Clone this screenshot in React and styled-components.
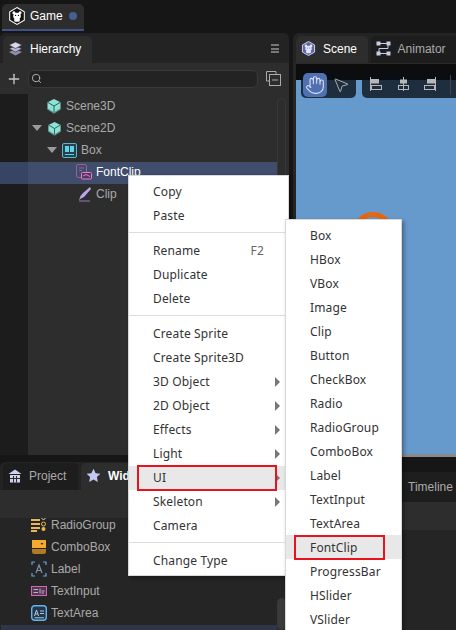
import React from 'react';
import styled, {createGlobalStyle} from 'styled-components';
import {Hand, MousePointer2, Plus, Search} from 'lucide-react';

const GlobalStyle = createGlobalStyle`
    html, body {
        margin: 0;
        padding: 0;
        background: #161616;
    }
    * {
        box-sizing: border-box;
    }
`;

const Page = styled.div`
    position: relative;
    width: 456px;
    height: 630px;
    overflow: hidden;
    display: flex;
    flex-direction: column;
    background: #161616;
    font-family: "Liberation Sans", Arial, sans-serif;
    font-size: 12px;
    color: #aaa;
`;

const TopBar = styled.div`
    height: 33px;
    flex: none;
    padding: 4px 0 0 2px;
    display: flex;
    align-items: flex-start;
`;

const GameTab = styled.div`
    width: 82px;
    height: 27px;
    padding: 0 0 2px 6px;
    display: flex;
    align-items: center;
    gap: 4px;
    background: #2d2d2d;
    border-bottom: 2px solid #3f5486;
    border-radius: 5px 5px 0 0;
    color: #fff;
`;

const Dot = styled.span`
    width: 8px;
    height: 8px;
    margin-left: 2px;
    border-radius: 50%;
    background: #46608f;
`;

const Workspace = styled.div`
    flex: 1;
    min-height: 0;
    display: grid;
    grid-template-columns: 289px 167px;
    column-gap: 4px;
    width: 460px;
`;

const Column = styled.div`
    display: flex;
    flex-direction: column;
    min-height: 0;
`;

const Panel = styled.div`
    display: flex;
    flex-direction: column;
    height: ${p => p.$height}px;
    margin-top: ${p => p.$top || 0}px;
    flex: ${p => (p.$grow ? 1 : 'none')};
    overflow: hidden;
    position: relative;
    border-radius: ${p => (p.$square ? '0' : '6px 6px 0 0')};
    background: #252525;
`;

const TabRow = styled.div`
    height: ${p => p.$height || 30}px;
    flex: none;
    padding: ${p => p.$top || 3}px 0 0 3px;
    display: flex;
    gap: 3px;
    background: #232323;
    position: relative;
`;

const Tab = styled.div`
    width: ${p => p.$width}px;
    height: 27px;
    padding: 0 0 2px 5px;
    display: flex;
    align-items: center;
    gap: 7px;
    border-radius: 5px 5px 0 0;
    background: ${p => (p.$active ? '#2d2d2d' : '#1d1d1d')};
    color: ${p => (p.$active ? '#fff' : '#aaa')};
    font-weight: ${p => (p.$bold ? 700 : 400)};
`;

const MenuIconButton = styled.div`
    position: absolute;
    right: 10px;
    top: 11px;
    width: 8px;
    height: 9px;
    border-top: 2px solid #777;
    border-bottom: 2px solid #777;

    &::after {
        content: '';
        display: block;
        margin-top: 1.5px;
        height: 2px;
        background: #777;
    }
`;

const TreeTools = styled.div`
    height: 31px;
    flex: none;
    padding: 0 0 0 6px;
    display: flex;
    align-items: center;
    background: #2d2d2d;
    color: #c8c8c8;
`;

const SearchBox = styled.div`
    width: 230px;
    height: 18px;
    margin-left: 6px;
    padding-left: 2px;
    display: flex;
    align-items: center;
    background: #232323;
    border: 1px solid #3a3a3a;
    border-radius: 6px;
    color: #bbb;
`;

const Collapse = styled.svg`
    margin-left: 8px;
`;

const TreeBody = styled.div`
    flex: 1;
    position: relative;
    padding-top: 2px;
    background: linear-gradient(90deg, #1c1c1c 28px, #2d2d2d 28px);
`;

const TreeRow = styled.div`
    height: 22px;
    width: 277px;
    padding: 0 0 2px ${p => p.$indent}px;
    display: flex;
    align-items: center;
    background: ${p => (p.$selected ? 'rgba(86, 112, 178, 0.48)' : 'transparent')};
    color: ${p => (p.$selected ? '#fff' : '#aaa')};
`;

const Arrow = styled.span`
    width: 0;
    height: 0;
    margin-right: 5px;
    border-left: 5px solid transparent;
    border-right: 5px solid transparent;
    border-top: 6px solid #9a9a9a;
`;

const RowIcon = styled.svg`
    flex: none;
    margin-right: 4px;
`;

const ScrollTrack = styled.div`
    position: absolute;
    left: 277px;
    top: ${p => p.$top}px;
    bottom: 0;
    width: 9px;
    border: 1px solid #383838;
    border-radius: 5px;
    background: ${p => p.$fill || 'transparent'};
`;

const WidgetTools = styled.div`
    height: 28px;
    flex: none;
    background: #2d2d2d;
`;

const WidgetList = styled.div`
    flex: 1;
    position: relative;
    padding-left: 31px;
    background: #252525;
`;

const WidgetRow = styled.div`
    height: 22px;
    display: flex;
    align-items: center;
    gap: 4px;

    &:first-child {
        margin-top: -4px;
    }
`;

const WidgetActive = styled.div`
    position: absolute;
    left: 1px;
    right: 12px;
    top: 107px;
    height: 6px;
    background: #2e3648;
`;

const Viewport = styled.div`
    flex: 1;
    position: relative;
    margin-left: 3px;
    display: flex;
    flex-direction: column;
    background: #0d0d0d;
    border-top: 1px solid #2a2a2a;
`;

const SceneBlue = styled.div`
    flex: 1;
    margin-top: 16px;
    background: #6699cc;
    position: relative;
    border-bottom: 3px solid #8a8a8a;

    &::after {
        content: '';
        position: absolute;
        right: -4px;
        bottom: -6px;
        width: 8px;
        height: 8px;
        border-radius: 50%;
        background: #555;
    }
`;

const OrangeRing = styled.div`
    position: absolute;
    left: 56px;
    top: 132px;
    width: 42px;
    height: 42px;
    border: 5px solid #e8650f;
    border-radius: 50%;
`;

const ToolGroup = styled.div`
    position: absolute;
    left: ${p => p.$left}px;
    top: 7px;
    width: ${p => p.$width}px;
    height: 27px;
    padding-left: ${p => p.$pad}px;
    display: flex;
    align-items: center;
    gap: ${p => p.$gap}px;
    border-radius: 5px;
    background: rgba(10, 15, 22, 0.78);
    color: #b8b8b8;
`;

const ToolButton = styled.div`
    width: 24px;
    height: 24px;
    display: flex;
    align-items: center;
    justify-content: center;
    border-radius: 5px;
    background: ${p => (p.$on ? '#5070b2' : 'transparent')};
    color: ${p => (p.$on ? '#d8e0f0' : '#b0b0b0')};
`;

const PointerButton = styled(ToolButton)`
    padding-left: 4px;
`;

const ToolSep = styled.span`
    width: 1px;
    height: 20px;
    background: #444;
`;

const TimelineBar = styled.div`
    height: 30px;
    flex: none;
    padding: 0 0 0 115px;
    display: flex;
    align-items: center;
    background: #1e1e1e;
    color: #aaa;
`;

const TimelineTools = styled.div`
    height: 28px;
    flex: none;
    background: #2d2d2d;
`;

const Menu = styled.div`
    position: absolute;
    left: ${p => p.$left}px;
    top: ${p => p.$top}px;
    width: ${p => p.$width}px;
    padding: ${p => p.$pad}px 0 2px;
    background: #fff;
    border: 1px solid #d8d8d8;
    box-shadow: 2px 2px 4px rgba(0, 0, 0, 0.35);
    font-family: "Noto Sans", "Open Sans", sans-serif;
    font-size: 12px;
    color: #333;
`;

const Item = styled.div`
    position: relative;
    height: 24px;
    padding: 0 24px ${p => p.$bottom}px;
    display: flex;
    align-items: center;
    justify-content: space-between;
    background: ${p => (p.$hot ? '#e8e8e8' : 'transparent')};
    letter-spacing: 0.15px;

    &::after {
        content: '';
        display: ${p => (p.$mark ? 'block' : 'none')};
        box-sizing: border-box;
        position: absolute;
        left: ${p => p.$markLeft}px;
        width: ${p => p.$markWidth}px;
        top: ${p => p.$markTop}px;
        height: ${p => p.$markHeight}px;
        border: 2px solid #e8131f;
    }
`;

const Shortcut = styled.span`
    color: #666;
`;

const SubArrow = styled.span`
    position: absolute;
    right: 8px;
    top: 7px;
    width: 0;
    height: 0;
    border-top: 5px solid transparent;
    border-bottom: 5px solid transparent;
    border-left: 5px solid #777;
`;

const Separator = styled.div`
    height: 1px;
    margin: 4px 0 6px;
    background: #ddd;
`;

const Cube = ({size = 16}) => (
    <RowIcon width={size} height={size} viewBox='0 0 16 16'>
        <path d='M8 1 14.5 4.2V11L8 15 1.500 11V4.200Z' fill='#8fe3d6' />
        <path d='M8 8V15M1.500 4.200 8 8 14.500 4.200' stroke='#2d5f5a' strokeWidth='1' fill='none' />
        <path d='M1.500 11 8 15 14.500 11' stroke='#5a8f88' strokeWidth='1.200' fill='none' />
    </RowIcon>
);

const BoxIcon = () => (
    <RowIcon width={15} height={15} viewBox='0 0 15 15'>
        <rect x='.5' y='.5' width='14' height='14' rx='1.500' fill='#24414c' stroke='#5cb5cc' />
        <rect x='3' y='3' width='9' height='6' fill='#63d0ea' />
        <path d='M3 11H12M7.500 3V9' stroke='#24414c' />
        <path d='M3 11.500H12' stroke='#63d0ea' />
    </RowIcon>
);

const FontClipIcon = () => (
    <RowIcon width={16} height={16} viewBox='0 0 16 16'>
        <rect x='.5' y='.5' width='10' height='13' rx='1.500' fill='none' stroke='#9a5f9a' />
        <path d='M3 4H8M3 6.500H6' stroke='#9a5f9a' />
        <rect x='5.500' y='8.500' width='10' height='6.500' rx='1' fill='#4a3a5e' stroke='#f07ccf' />
        <path d='M7 12 10 10.500 14 12.500' stroke='#f07ccf' fill='none' />
    </RowIcon>
);

const ClipIcon = () => (
    <RowIcon width={14} height={16} viewBox='0 0 14 16' style={{marginLeft: 1}}>
        <path d='M12 1 13 3 6 11 3 12.500 1 14 2.500 10 5 7Z' fill='#b9a6ec' />
        <path d='M1 15H12' stroke='#8f7fc4' />
    </RowIcon>
);

const RadioGroupIcon = () => (
    <RowIcon width={16} height={16} viewBox='0 0 16 16' style={{marginRight: 0}}>
        <path d='M0 3H9M0 7H9M0 11H9M0 14H6' stroke='#eab755' strokeWidth='2' />
        <circle cx='12.500' cy='7' r='2' fill='none' stroke='#eab755' />
        <circle cx='12.500' cy='12' r='2' fill='#eab755' />
        <path d='M10.500 1 12.500 3 14.500 1' stroke='#ddd' fill='none' />
    </RowIcon>
);

const ComboIcon = () => (
    <RowIcon width={16} height={16} viewBox='0 0 16 16' style={{marginRight: 0}}>
        <path d='M1 1H15V9H1Z' fill='#f4a92f' />
        <path d='M1 10H15V12.500Q15 15 12.500 15H3.500Q1 15 1 12.500Z' fill='#b47a22' />
        <path d='M9.500 4H12.500L11 6Z' fill='#333' />
    </RowIcon>
);

const LabelIcon = () => (
    <RowIcon width={16} height={16} viewBox='0 0 16 16' style={{marginRight: 0}}>
        <path d='M4 1H1V4M12 1H15V4M1 12V15H4M15 12V15H12' stroke='#5ea8e6' strokeWidth='1.200' fill='none' />
        <path d='M5 12 8 4 11 12M6 9.500H10' stroke='#7d93ae' strokeWidth='1.200' fill='none' />
    </RowIcon>
);

const TextInputIcon = () => (
    <RowIcon width={16} height={16} viewBox='0 0 16 16' style={{marginRight: 0}}>
        <rect x='.5' y='3.500' width='15' height='9' fill='#4d3a50' stroke='#d466b6' />
        <path d='M2.500 6.500H7M2.500 9.500H7M9 5.500V10.500M10.500 8H13.500M10.500 10H13' stroke='#d9a3cc' />
    </RowIcon>
);

const TextAreaIcon = () => (
    <RowIcon width={16} height={16} viewBox='0 0 16 16' style={{marginRight: 0}}>
        <rect x='.7' y='.7' width='14.600' height='14.600' rx='3' fill='#23374c' stroke='#66b4ee' strokeWidth='1.400' />
        <path d='M3.500 11 5.500 5 7.500 11M4.300 9H6.700M9 6H13M9 8.500H13M3.500 12.800H13' stroke='#bcd8ee' fill='none' strokeWidth='.9' />
    </RowIcon>
);

const BearHex = ({size, fill, face}) => (
    <svg width={size} height={size} viewBox='0 0 16 16' style={{flex: 'none'}}>
        <path d='M8 .5 14.500 4.200V11.800L8 15.500 1.500 11.800V4.200Z' fill={fill} stroke={face} strokeWidth='.9' />
        <circle cx='5.300' cy='5.200' r='1.400' fill={face} />
        <circle cx='10.700' cy='5.200' r='1.400' fill={face} />
        <ellipse cx='8' cy='8' rx='3.400' ry='3' fill={face} />
        <rect x='5.500' y='10' width='5' height='3' rx='1' fill={face} />
        <circle cx='6.700' cy='7.500' r='.6' fill={fill} />
        <circle cx='9.300' cy='7.500' r='.6' fill={fill} />
    </svg>
);

const LayersIcon = () => (
    <svg width={15} height={15} viewBox='0 0 15 15' style={{flex: 'none'}}>
        <path d='M7.500 8.500 1 11 7.500 14.500 14 11Z' fill='#8d8fae' />
        <path d='M7.500 5 1 7.700 7.500 11 14 7.700Z' fill='#b4b6d2' stroke='#2d2d2d' strokeWidth='.6' />
        <path d='M7.500 1 1 4 7.500 7.500 14 4Z' fill='#d5d7ee' stroke='#2d2d2d' strokeWidth='.6' />
    </svg>
);

const AnimatorIcon = () => (
    <svg width={15} height={15} viewBox='0 0 15 15' style={{flex: 'none'}}>
        <path d='M3 2.500H12M12 2.500V7.500H3V12.500H12' stroke='#c8cdea' fill='none' />
        <rect x='0.500' y='0.500' width='4' height='4' fill='#c8cdea' />
        <rect x='10.500' y='0.500' width='4' height='4' fill='#c8cdea' />
        <rect x='0.500' y='10.500' width='4' height='4' fill='#c8cdea' />
        <rect x='10.500' y='10.500' width='4' height='4' fill='#c8cdea' />
    </svg>
);

const HouseIcon = () => (
    <svg width={14} height={14} viewBox='0 0 14 14' style={{flex: 'none'}}>
        <path d='M7 .5 13.500 5H.5Z' fill='#cfd2ea' />
        <path d='M2 6H12V13.500H2Z' fill='#cfd2ea' />
        <path d='M5.500 7V13.500M8.500 7V13.500M2 9.500H12' stroke='#2a2a2a' />
    </svg>
);

const StarIcon = () => (
    <svg width={15} height={15} viewBox='0 0 15 15' style={{flex: 'none'}}>
        <path d='M7.500 .8 9.600 5.200 14.400 5.800 10.900 9.100 11.800 13.900 7.500 11.500 3.200 13.900 4.100 9.100.6 5.800 5.400 5.200Z' fill='#c4c8f4' />
    </svg>
);

const AlignIcon = ({bar}) => (
    <svg width={14} height={15} viewBox='0 0 14 15'>
        <path d={`M${bar}.500 0V14`} stroke='#b8b8b8' fill='none' />
        {bar === 1 && <rect x='2' y='2' width='8' height='4.500' fill='#b8b8b8' />}
        {bar === 1 && <rect x='2.500' y='8.500' width='10' height='4' fill='none' stroke='#b8b8b8' />}
        {bar === 7 && <rect x='4' y='2.500' width='7' height='4' fill='#b8b8b8' />}
        {bar === 7 && <rect x='2.500' y='8.500' width='10' height='4' fill='none' stroke='#b8b8b8' />}
        {bar === 12 && <rect x='4' y='2' width='8' height='4.500' fill='#b8b8b8' />}
        {bar === 12 && <rect x='1.500' y='8.500' width='10' height='4' fill='none' stroke='#b8b8b8' />}
    </svg>
);

const mainMenu = [
    ['Copy'], ['Paste'], null,
    ['Rename', 'F2'], ['Duplicate'], ['Delete'], null,
    ['Create Sprite'], ['Create Sprite3D'],
    ['3D Object', '', true], ['2D Object', '', true], ['Effects', '', true], ['Light', '', true],
    ['UI', '', true], ['Skeleton', '', true], ['Camera'], null,
    ['Change Type']
];

const uiMenu = [
    'Box', 'HBox', 'VBox', 'Image', 'Clip', 'Button', 'CheckBox', 'Radio', 'RadioGroup',
    'ComboBox', 'Label', 'TextInput', 'TextArea', 'FontClip', 'ProgressBar', 'HSlider', 'VSlider'
];

const widgets = [
    ['RadioGroup', RadioGroupIcon],
    ['ComboBox', ComboIcon],
    ['Label', LabelIcon],
    ['TextInput', TextInputIcon],
    ['TextArea', TextAreaIcon]
];

export default function App() {
    return (
        <Page>
            <GlobalStyle />
            <TopBar>
                <GameTab>
                    <BearHex size={18} fill='#111' face='#fff' />
                    Game
                    <Dot />
                </GameTab>
            </TopBar>

            <Workspace>
                <Column>
                    <Panel $height={422}>
                        <TabRow>
                            <Tab $active $width={89}>
                                <LayersIcon />
                                Hierarchy
                            </Tab>
                            <MenuIconButton />
                        </TabRow>
                        <TreeTools>
                            <Plus size={16} strokeWidth={2} />
                            <SearchBox>
                                <Search size={11} strokeWidth={2} />
                            </SearchBox>
                            <Collapse width={15} height={15} viewBox='0 0 15 15'>
                                <path d='M10 3V.5H.5V10H3' stroke='#aaa' fill='none' />
                                <rect x='3.500' y='3.500' width='11' height='11' fill='none' stroke='#aaa' />
                                <path d='M6 9H12' stroke='#aaa' />
                            </Collapse>
                        </TreeTools>
                        <TreeBody>
                            <TreeRow $indent={46}>
                                <Cube />
                                Scene3D
                            </TreeRow>
                            <TreeRow $indent={32}>
                                <Arrow />
                                <Cube size={15} />
                                Scene2D
                            </TreeRow>
                            <TreeRow $indent={47}>
                                <Arrow />
                                <BoxIcon />
                                Box
                            </TreeRow>
                            <TreeRow $indent={76} $selected>
                                <FontClipIcon />
                                FontClip
                            </TreeRow>
                            <TreeRow $indent={77}>
                                <ClipIcon />
                                Clip
                            </TreeRow>
                            <ScrollTrack $top={4} />
                        </TreeBody>
                    </Panel>

                    <Panel $top={7} $grow>
                        <TabRow $height={28} $top={1}>
                            <Tab $width={75}>
                                <HouseIcon />
                                Project
                            </Tab>
                            <Tab $active $bold $width={120}>
                                <StarIcon />
                                Widgets
                            </Tab>
                        </TabRow>
                        <WidgetTools />
                        <WidgetList>
                            {widgets.map(([name, Icon]) => (
                                <WidgetRow key={name}>
                                    <Icon />
                                    {name}
                                </WidgetRow>
                            ))}
                            <WidgetActive />
                            <ScrollTrack $top={80} $fill='#3a3a3a' />
                        </WidgetList>
                    </Panel>
                </Column>

                <Column>
                    <Panel $height={424}>
                        <TabRow>
                            <Tab $active $width={72}>
                                <BearHex size={15} fill='#5a67ae' face='#e8e8f4' />
                                Scene
                            </Tab>
                            <Tab $width={90}>
                                <AnimatorIcon />
                                Animator
                            </Tab>
                        </TabRow>
                        <Viewport>
                            <SceneBlue>
                                <OrangeRing />
                            </SceneBlue>
                            <ToolGroup $left={5} $width={55} $pad={2} $gap={0}>
                                <ToolButton $on>
                                    <Hand size={20} strokeWidth={1.3} />
                                </ToolButton>
                                <PointerButton>
                                    <MousePointer2 size={18} strokeWidth={1.3} />
                                </PointerButton>
                            </ToolGroup>
                            <ToolGroup $left={66} $width={110} $pad={7} $gap={13}>
                                <AlignIcon bar={1} />
                                <AlignIcon bar={7} />
                                <AlignIcon bar={12} />
                                <ToolSep />
                            </ToolGroup>
                        </Viewport>
                    </Panel>

                    <Panel $top={15} $grow $square>
                        <TimelineBar>Timeline</TimelineBar>
                        <TimelineTools />
                    </Panel>
                </Column>
            </Workspace>

            <Menu $left={128} $top={175} $width={161} $pad={4}>
                {mainMenu.map((item, i) => {
                    if (!item) {
                        return <Separator key={i} />;
                    }
                    const [label, shortcut, sub] = item;
                    const isUi = label === 'UI';
                    return (
                        <Item
                            key={label}
                            $bottom={2}
                            $hot={isUi}
                            $mark={isUi}
                            $markLeft={8}
                            $markWidth={140}
                            $markTop={-1}
                            $markHeight={26}
                        >
                            {label}
                            {shortcut && <Shortcut>{shortcut}</Shortcut>}
                            {sub && <SubArrow />}
                        </Item>
                    );
                })}
            </Menu>

            <Menu $left={285} $top={219} $width={117} $pad={3}>
                {uiMenu.map(label => {
                    const isFont = label === 'FontClip';
                    return (
                        <Item
                            key={label}
                            $bottom={0}
                            $hot={isFont}
                            $mark={isFont}
                            $markLeft={8}
                            $markWidth={91}
                            $markTop={0}
                            $markHeight={25}
                        >
                            {label}
                        </Item>
                    );
                })}
            </Menu>
        </Page>
    );
}
